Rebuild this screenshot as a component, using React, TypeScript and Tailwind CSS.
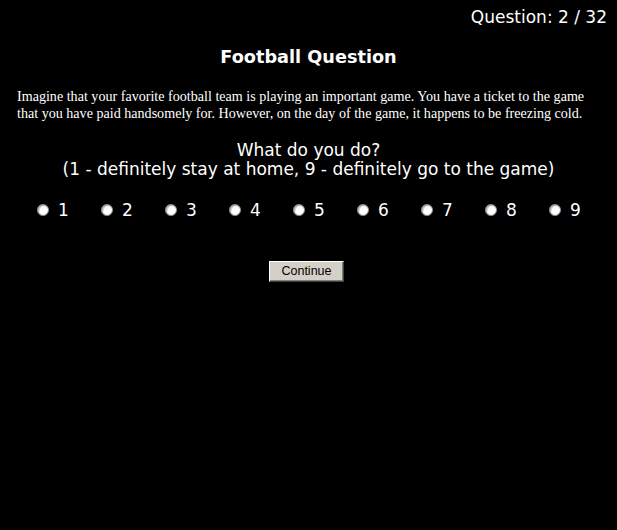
import { useState } from "react";

const choices = [1, 2, 3, 4, 5, 6, 7, 8, 9];

export default function App() {
  const [picked, setPicked] = useState<number | null>(null);

  return (
    <div className="min-h-[530px] w-full bg-black text-white font-['DejaVu_Sans',Verdana,sans-serif]">
      {/* counter */}
      <div className="flex justify-end pr-[10px] pt-[7px] text-[17px] leading-[20px]">
        Question: 2 / 32
      </div>

      <h1 className="mt-[19px] text-center text-[17.7px] font-bold leading-[22px]">
        Football Question
      </h1>

      <p className="mt-[20px] px-[17px] font-['Liberation_Serif','Times_New_Roman',serif] text-[14.1px] leading-[17px]">
        Imagine that your favorite football team is playing an important game. You have a ticket to the game
        that you have paid handsomely for. However, on the day of the game, it happens to be freezing cold.
      </p>

      <div className="mt-[19px] text-center text-[17px] leading-[19px]">
        <div>What do you do?</div>
        <div>(1 - definitely stay at home, 9 - definitely go to the game)</div>
      </div>

      {/* scale */}
      <div className="mt-[21px] flex pl-[37px]">
        {choices.map((n) => (
          <label
            key={n}
            className="flex w-[64px] cursor-pointer items-center gap-[9px] text-[17px] leading-[20px]"
            onClick={() => setPicked(n)}
          >
            <span className="flex h-[12px] w-[12px] items-center justify-center rounded-full border border-[#8a8a8a] bg-white shadow-[inset_1px_1px_1px_#aaa]">
              {picked === n && <span className="h-[4px] w-[4px] rounded-full bg-black" />}
            </span>
            <span>{n}</span>
          </label>
        ))}
      </div>

      <div className="mt-[41px] flex justify-center pr-[4px]">
        <button className="h-[21px] w-[75px] border border-t-white border-l-white border-r-[#404040] border-b-[#404040] bg-[#d4d0c8] font-['Liberation_Sans',Arial,sans-serif] text-[12.5px] leading-[17px] text-black shadow-[inset_-1px_-1px_0_#808080]">
          Continue
        </button>
      </div>
    </div>
  );
}
